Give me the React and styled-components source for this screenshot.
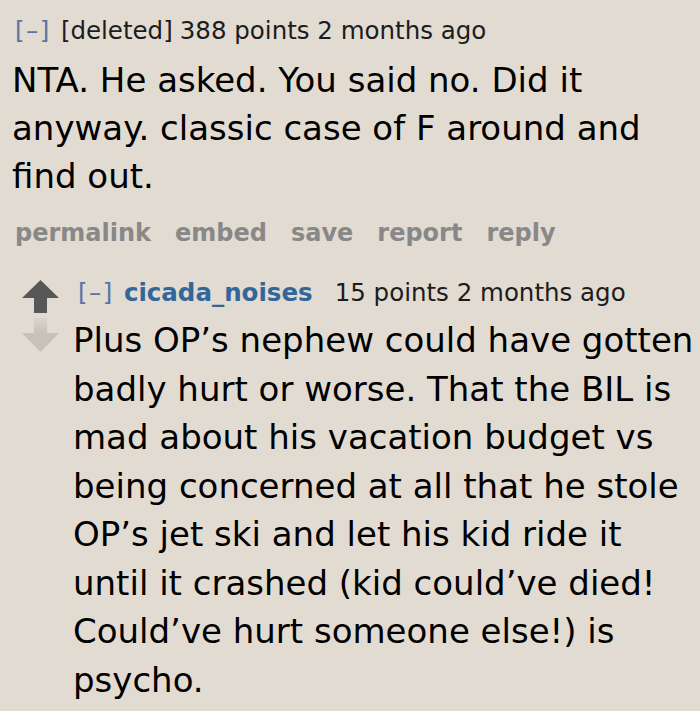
import styled, { createGlobalStyle } from 'styled-components'

const GlobalStyle = createGlobalStyle`
  html, body {
    margin: 0;
    padding: 0;
    background: #e2dbd2;
  }
  body {
    font-family: 'DejaVu Sans', Verdana, sans-serif;
  }
`

const Page = styled.div`
  width: 700px;
  height: 711px;
  overflow: hidden;
  background: #e2dbd2;
  padding: 15px 0 0 12px;
  box-sizing: border-box;
`

const Tagline = styled.div`
  font-size: 24.5px;
  line-height: 32px;
  color: #1c1c1c;
  white-space: nowrap;
  display: flex;
  align-items: baseline;
  padding-left: ${(p) => p.$indent || '0'};
`

const Collapse = styled.span`
  color: #5b74a5;
  letter-spacing: 1.5px;
  margin-right: 10px;
`

const Author = styled.span`
  color: ${(p) => (p.$deleted ? '#1c1c1c' : '#336699')};
  font-weight: ${(p) => (p.$deleted ? 'normal' : 'bold')};
  margin-right: ${(p) => (p.$deleted ? '7px' : '22px')};
`

const Body = styled.div`
  font-size: 34px;
  line-height: ${(p) => p.$lh};
  color: #000;
  margin-top: ${(p) => p.$top};
  width: ${(p) => p.$width};
`

const Buttons = styled.div`
  display: flex;
  gap: 24px;
  margin: 18px 0 0 3px;
  font-size: 24px;
  line-height: 30px;
  font-weight: bold;
  color: #888;
`

const Child = styled.div`
  display: flex;
  gap: 14px;
  margin: 29px 0 0 10px;
`

const Midcol = styled.div`
  display: flex;
  flex-direction: column;
  gap: 5px;
  padding-top: 3px;
`

const Entry = styled.div`
  display: flex;
  flex-direction: column;
`

function Arrow({ up }) {
  return up ? (
    <svg width="37" height="33" viewBox="0 0 37 33">
      <path d="M18.5 0 L37 18 L25 18 L25 33 L12 33 L12 18 L0 18 Z" fill="#575757" />
    </svg>
  ) : (
    <svg width="37" height="34" viewBox="0 0 37 34">
      <defs>
        <linearGradient id="fade" x1="0" y1="0" x2="0" y2="1">
          <stop offset="0" stopColor="#c6c1bb" stopOpacity="0.3" />
          <stop offset="0.45" stopColor="#c6c1bb" />
          <stop offset="1" stopColor="#c6c1bb" />
        </linearGradient>
      </defs>
      <path d="M12 0 L25 0 L25 15 L37 15 L18.5 34 L0 15 L12 15 Z" fill="url(#fade)" />
    </svg>
  )
}

export default function App() {
  return (
    <>
      <GlobalStyle />
      <Page>
        <Tagline $indent="3px">
          <Collapse>[–]</Collapse>
          <Author $deleted>[deleted]</Author>
          <span>388 points 2 months ago</span>
        </Tagline>
        <Body $width="676px" $top="9px" $lh="48px">
          NTA. He asked. You said no. Did it anyway. classic case of F around and find out.
        </Body>
        <Buttons>
          <span>permalink</span>
          <span>embed</span>
          <span>save</span>
          <span>report</span>
          <span>reply</span>
        </Buttons>
        <Child>
          <Midcol>
            <Arrow up />
            <Arrow />
          </Midcol>
          <Entry>
            <Tagline $indent="5px">
              <Collapse>[–]</Collapse>
              <Author>cicada_noises</Author>
              <span>15 points 2 months ago</span>
            </Tagline>
            <Body $width="628px" $top="7px" $lh="48.5px">
              Plus OP’s nephew could have gotten badly hurt or worse. That the BIL is mad about his vacation budget vs being concerned at all that he stole OP’s jet ski and let his kid ride it until it crashed (kid could’ve died! Could’ve hurt someone else!) is psycho.
            </Body>
          </Entry>
        </Child>
      </Page>
    </>
  )
}
